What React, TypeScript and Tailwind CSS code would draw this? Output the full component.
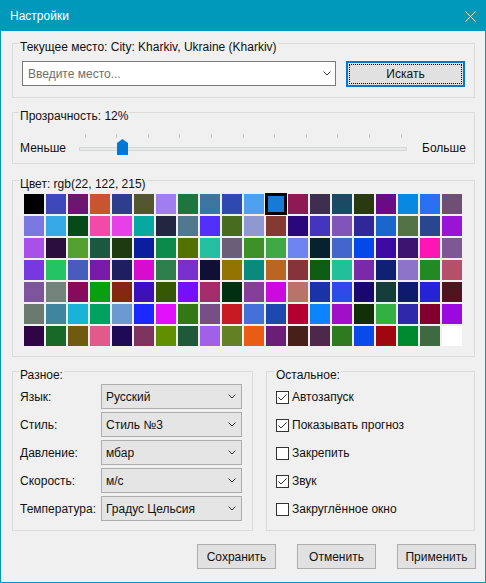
import React from 'react';

const colors: string[][] = [
  ['#000000', '#3f48b8', '#6e1570', '#c85530', '#2e3d8c', '#545630', '#a07ef0', '#1e763e', '#3a76a0', '#2e4ab0', '#50a0f0', '#167ad7', '#8e1a55', '#3f2e50', '#1a4a66', '#2a3a10', '#6a0a84', '#0888e0', '#2a70f0', '#6e5074'],
  ['#7a78e0', '#36a8e6', '#064a1a', '#f24aa8', '#e840e8', '#06a8a0', '#222640', '#527890', '#5030fa', '#486c1e', '#9098d0', '#843a30', '#28087a', '#4434c0', '#8054b8', '#302898', '#1a66cc', '#527444', '#2a4690', '#9a14d8'],
  ['#a850e8', '#2c0e3c', '#54a030', '#1a5840', '#1e3a10', '#0c1ea0', '#0c8a4c', '#527000', '#22c09e', '#6a5e78', '#3e9028', '#40a844', '#6e84f0', '#05222e', '#4466cc', '#0448e8', '#3c0aa0', '#3c1470', '#ff14b4', '#7e5894'],
  ['#7838e0', '#22c464', '#485cbc', '#7a1aa8', '#1e1e60', '#d80ccc', '#2e7e4c', '#7830cc', '#101034', '#947400', '#0a8a7c', '#b86622', '#86343c', '#0e5c14', '#22c09a', '#7a2aa8', '#102074', '#8e74c8', '#228a22', '#b4506c'],
  ['#7e549c', '#72847c', '#880a5a', '#08a010', '#842810', '#3e10bc', '#365806', '#7610f8', '#a42c6a', '#003010', '#844098', '#cc0ae0', '#b87468', '#1a34a8', '#2e4ae8', '#1a0870', '#143e3a', '#0e1a6e', '#2424d4', '#4e1420'],
  ['#6a7a70', '#3e86a0', '#18b4d8', '#00a060', '#6a9ad0', '#1a2aff', '#e010f8', '#327814', '#744e84', '#c81a22', '#4470d8', '#1e48b0', '#b40030', '#0c84ff', '#a010c8', '#122e06', '#32b044', '#2e28aa', '#820030', '#9a0ae0'],
  ['#2e0444', '#186828', '#705a10', '#e05a8c', '#1e0a54', '#7c345e', '#609000', '#1e5a3a', '#a060e8', '#648024', '#e85c14', '#6a1e78', '#48201a', '#4e284a', '#2e7a1e', '#0a4ae8', '#a0060e', '#008a30', '#3e6a42', '#ffffff'],
];

const selects = [
  { label: 'Язык:', value: 'Русский' },
  { label: 'Стиль:', value: 'Стиль №3' },
  { label: 'Давление:', value: 'мбар' },
  { label: 'Скорость:', value: 'м/с' },
  { label: 'Температура:', value: 'Градус Цельсия' },
];

const options = [
  { label: 'Автозапуск', checked: true },
  { label: 'Показывать прогноз', checked: true },
  { label: 'Закрепить', checked: false },
  { label: 'Звук', checked: true },
  { label: 'Закруглённое окно', checked: false },
];

const Chevron = () => (
  <svg width="8" height="5" viewBox="0 0 8 5" className="shrink-0">
    <path d="M0.5 0.5 L4 4 L7.5 0.5" fill="none" stroke="#333" strokeWidth="1" />
  </svg>
);

// group box with caption cut into the top border
const Group = ({
  title,
  className,
  legendClass = 'ml-[6px]',
  children,
}: {
  title: string;
  className: string;
  legendClass?: string;
  children: React.ReactNode;
}) => (
  <div className={`border border-[#dcdcdc] ${className}`}>
    <div className={`-mt-[5px] ${legendClass} px-[1px] w-fit bg-[#f0f0f0] leading-[16px]`}>{title}</div>
    {children}
  </div>
);

const Slider = () => {
  const ticks = Array.from({ length: 11 }, (_, i) => 5.5 + i * 31.6);
  return (
    <svg width="328" height="22" viewBox="0 0 328 22" className="shrink-0">
      {ticks.map((x) => (
        <line key={x} x1={Math.round(x) + 0.5} y1="0" x2={Math.round(x) + 0.5} y2="4" stroke="#c4c4c4" />
      ))}
      <rect x="0.5" y="13.5" width="327" height="3" fill="#e7eaea" stroke="#d6d6d6" />
      <polygon points="38,9 43.5,5 49,9 49,21 38,21" fill="#0078d7" />
    </svg>
  );
};

const Checkbox = ({ checked }: { checked: boolean }) => (
  <div className="w-[13px] h-[13px] border border-[#333] bg-white flex items-center justify-center shrink-0">
    {checked && (
      <svg width="11" height="11" viewBox="0 0 11 11">
        <path d="M1.5 5.5 L4 8 L9.5 2.5" fill="none" stroke="#333" strokeWidth="1" />
      </svg>
    )}
  </div>
);

const App = () => {
  return (
    <div className="w-[486px] h-[583px] border border-[#0099bc] bg-[#f0f0f0] flex flex-col text-[12px] text-[#111] font-['Liberation_Sans',Arial,sans-serif] overflow-hidden">
      {/* title bar */}
      <div className="h-[30px] bg-[#0099bc] flex items-center justify-between pl-[9px] pr-[9px] text-white text-[12px]">
        <span>Настройки</span>
        <svg width="11" height="11" viewBox="0 0 11 11">
          <path d="M0.5 0.5 L10.5 10.5 M10.5 0.5 L0.5 10.5" stroke="white" strokeWidth="1" />
        </svg>
      </div>

      <div className="pl-[11px] pr-[10px] flex flex-col">
        {/* current place */}
        <Group title="Текущее место: City: Kharkiv, Ukraine (Kharkiv)" className="mt-[12px] h-[55px]">
          <div className="mt-[6px] pl-[9px] flex items-start gap-[10px]">
            <div className="w-[314px] h-[25px] bg-white border border-[#7a7a7a] flex items-center justify-between pl-[5px] pr-[4px]">
              <span className="text-[#6d6d6d]">Введите место...</span>
              <Chevron />
            </div>
            <div className="w-[119px] h-[26px] bg-[#e1e1e1] border-2 border-[#0078d7] p-[1px]">
              <div className="h-full border border-dotted border-black flex items-center justify-center">Искать</div>
            </div>
          </div>
        </Group>

        {/* opacity */}
        <Group title="Прозрачность: 12%" className="mt-[14px] h-[52px]">
          <div className="mt-[10px] pl-[7px] flex items-start">
            <span className="w-[59px] mt-[6px] leading-[16px]">Меньше</span>
            <Slider />
            <span className="ml-[15px] mt-[6px] leading-[16px]">Больше</span>
          </div>
        </Group>

        {/* colour */}
        <Group title="Цвет: rgb(22, 122, 215)" className="mt-[16px] h-[177px]">
          <div className="mt-[2px] pl-[11px] grid grid-cols-[repeat(20,20px)] auto-rows-[20px] gap-[2px]">
            {colors.flatMap((row, r) =>
              row.map((c, i) =>
                r === 0 && i === 11 ? (
                  <div key={`${r}-${i}`} className="border-2 border-black outline-1 outline-black" style={{ background: c }} />
                ) : (
                  <div key={`${r}-${i}`} style={{ background: c }} />
                )
              )
            )}
          </div>
        </Group>

        <div className="mt-[14px] flex gap-[13px]">
          <Group title="Разное:" className="w-[241px] h-[160px]">
            <div className="mt-[1px] pl-[7px] flex flex-col gap-[3px]">
              {selects.map((s) => (
                <div key={s.label} className="flex items-center">
                  <span className="w-[81px]">{s.label}</span>
                  <div className="w-[141px] h-[25px] bg-[#e5e5e5] border border-[#adadad] flex items-center justify-between pl-[4px] pr-[5px]">
                    <span>{s.value}</span>
                    <Chevron />
                  </div>
                </div>
              ))}
            </div>
          </Group>

          <Group title="Остальное:" className="w-[209px] h-[160px]" legendClass="ml-[8px]">
            <div className="pl-[9px] flex flex-col">
              {options.map((o) => (
                <div key={o.label} className="h-[28px] flex items-center gap-[3px]">
                  <Checkbox checked={o.checked} />
                  <span>{o.label}</span>
                </div>
              ))}
            </div>
          </Group>
        </div>

        <div className="mt-[13px] -mr-[1px] flex justify-end gap-[21px]">
          {['Сохранить', 'Отменить', 'Применить'].map((b) => (
            <div key={b} className="w-[79px] h-[25px] bg-[#e1e1e1] border border-[#adadad] flex items-center justify-center">
              {b}
            </div>
          ))}
        </div>
      </div>
    </div>
  );
};

export default App;
